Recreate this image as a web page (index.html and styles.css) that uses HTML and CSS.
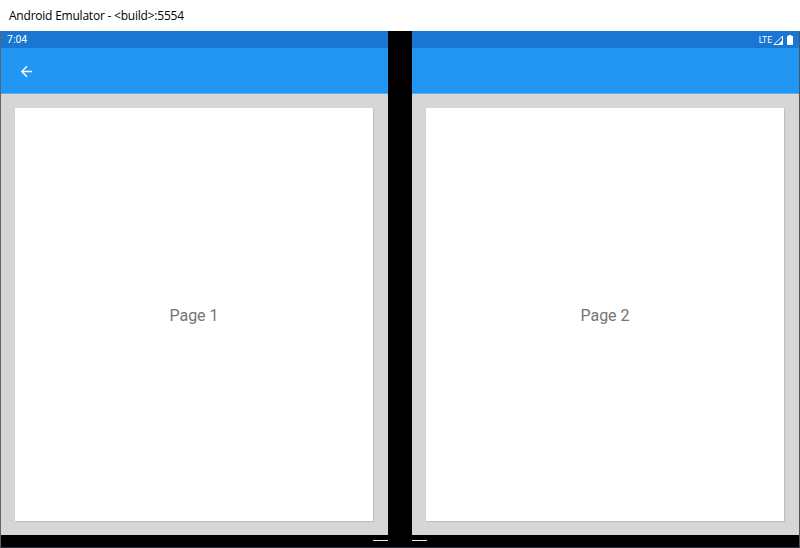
FILE: index.html
```html
<!DOCTYPE html>
<html lang="en">
<head>
<meta charset="utf-8">
<title>Android Emulator</title>
<link rel="stylesheet" href="styles.css">
</head>
<body>
<div class="window">
  <header class="titlebar">Android Emulator - &lt;build&gt;:5554</header>
  <main class="screens">
    <section class="pane pane-left">
      <div class="statusbar"><span class="time">7:04</span></div>
      <div class="appbar">
        <svg class="back" width="24" height="24" viewBox="0 0 24 24"><path d="M20 11H7.83l5.59-5.59L12 4l-8 8 8 8 1.41-1.41L7.83 13H20v-2z" fill="#fff"/></svg>
      </div>
      <div class="content"><div class="card">Page 1</div></div>
      <div class="navbar"><span class="handle"></span></div>
    </section>
    <div class="hinge"></div>
    <section class="pane pane-right">
      <div class="statusbar">
        <span class="lte">LTE</span>
        <svg class="signal" width="10" height="10" viewBox="0 0 10 10"><path d="M9.5 1V9.500H1Z" fill="none" stroke="#fff" stroke-width="1"/><path d="M9.5 5V9.500H5Z" fill="#fff"/></svg>
        <svg class="battery" width="6" height="10" viewBox="0 0 6 10"><path d="M1.500 0h3v1h.8c.4 0 .7.300.7.700v7.600c0 .4-.3.700-.7.700H.7c-.4 0-.7-.3-.7-.7V1.700C0 1.300.3 1 .7 1h.8z" fill="#fff"/></svg>
      </div>
      <div class="appbar"></div>
      <div class="content"><div class="card">Page 2</div></div>
      <div class="navbar"><span class="handle"></span></div>
    </section>
  </main>
</div>
</body>
</html>
```
FILE: styles.css
```css
* { box-sizing: border-box; }
html, body { margin: 0; padding: 0; }
body { width: 800px; height: 548px; overflow: hidden; background: #fff; }
.window { display: flex; flex-direction: column; height: 548px; }
.titlebar {
  height: 31px;
  flex: none;
  padding: 8px 0 0 9px;
  font: 12px/16px "Open Sans", "Liberation Sans", sans-serif;
  letter-spacing: -0.22px;
  color: #000;
  background: #fff;
}
.screens {
  flex: 1;
  display: flex;
  min-height: 0;
  background: #000;
  border-left: 1px solid #5c6470;
  border-right: 1px solid #4a5462;
  border-bottom: 1px solid #2c3444;
}
.pane { width: 387px; flex: none; display: flex; flex-direction: column; }
.hinge { width: 24px; flex: none; background: #000; }
.statusbar {
  height: 17px;
  flex: none;
  background: #1976d2;
  color: #fff;
  display: flex;
  align-items: center;
  font-family: Roboto, sans-serif;
}
.time { font-size: 10.500px; font-weight: 400; padding-left: 6px; }
.pane-right .statusbar { justify-content: flex-end; padding-right: 6px; }
.lte { font-size: 8.500px; margin-right: 1px; }
.signal { margin-right: 4px; }
.appbar {
  height: 46px;
  flex: none;
  background: #2196f3;
  border-bottom: 1px solid #55aef6;
  display: flex;
  align-items: center;
  padding: 1px 0 0 17px;
}
.back { width: 17px; height: 17px; }
.content {
  flex: 1;
  min-height: 0;
  background: #d6d6d6;
  padding: 14px 15px 14px 14px;
  display: flex;
}
.card {
  flex: 1;
  background: #fff;
  box-shadow: 1px 1px 1px rgba(0, 0, 0, 0.1), 0 0 1px rgba(0, 0, 0, 0.08);
  display: flex;
  align-items: center;
  justify-content: center;
  padding-top: 2px;
  font: 16px Roboto, sans-serif;
  color: #757575;
}
.navbar {
  height: 12px;
  flex: none;
  background: #000;
  position: relative;
}
.handle { position: absolute; top: 5px; width: 15px; height: 1px; background: #e8e8e8; }
.pane-left .handle { right: 0; }
.pane-right .handle { left: 0; }
```
